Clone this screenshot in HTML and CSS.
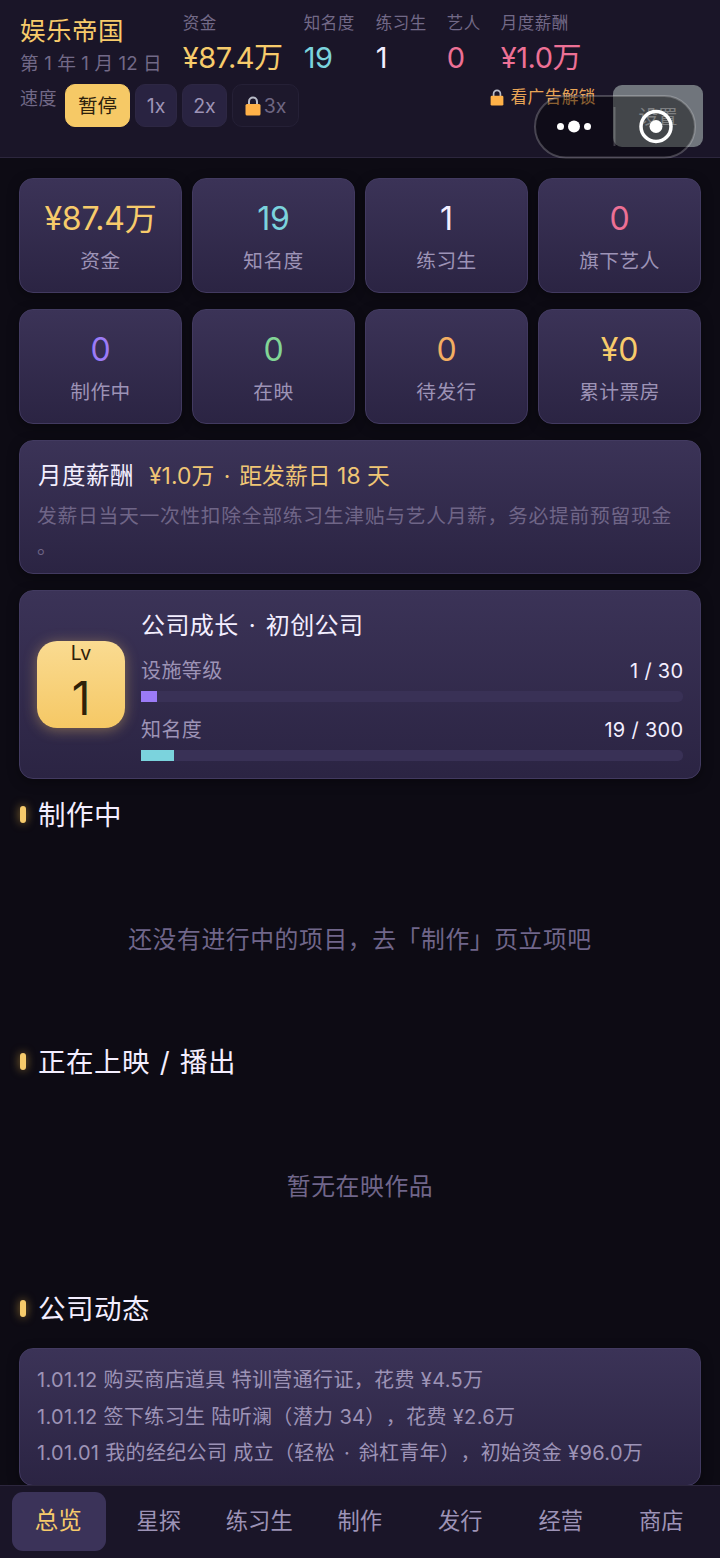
FILE: index.html
```html
<!DOCTYPE html>
<html lang="zh-CN">
<head>
<meta charset="utf-8">
<title>娱乐帝国</title>
<link rel="stylesheet" href="styles.css">
</head>
<body>
<header class="topbar">
  <div class="top-row">
    <div class="brand"><h1 class="brand-name gold">娱乐帝国</h1><div class="brand-date">第 1 年 1 月 12 日</div></div>
    <dl class="stat stat-money"><dt>资金</dt><dd class="gold">¥87.4万</dd></dl>
    <dl class="stat stat-fame"><dt>知名度</dt><dd class="cyan">19</dd></dl>
    <dl class="stat stat-trainee"><dt>练习生</dt><dd>1</dd></dl>
    <dl class="stat stat-artist"><dt>艺人</dt><dd class="pink">0</dd></dl>
    <dl class="stat stat-pay"><dt>月度薪酬</dt><dd class="pink">¥1.0万</dd></dl>
  </div>
  <div class="speed-row">
    <span class="speed-label">速度</span>
    <button class="speed speed-pause">暂停</button>
    <button class="speed speed-1">1x</button>
    <button class="speed speed-2">2x</button>
    <button class="speed speed-3"><svg class="lock" viewBox="0 0 16 20"><path d="M4 9V5.500a4 4 0 0 1 8 0V9" fill="none" stroke="#b9bcc8" stroke-width="2"/><rect x=".5" y="8" width="15" height="11.500" rx="1.500" fill="#ffb148"/></svg>3x</button>
    <span class="unlock"><svg class="lock-small" viewBox="0 0 16 20"><path d="M4 9V5.500a4 4 0 0 1 8 0V9" fill="none" stroke="#b9bcc8" stroke-width="2"/><rect x=".5" y="8" width="15" height="11.500" rx="1.500" fill="#ffb148"/></svg>看广告解锁</span>
    <button class="settings">设置</button>
  </div>
  <div class="capsule">
    <svg viewBox="0 0 162 64"><rect x="1" y="1" width="160" height="61.500" rx="30.750" fill="#000" fill-opacity=".4" stroke="#fff" stroke-opacity=".22" stroke-width="2"/><path d="M80.500 12v39" stroke="#fff" stroke-opacity=".2" stroke-width="2"/><g fill="#fff"><circle cx="26.500" cy="31.500" r="3.500"/><circle cx="40" cy="31.500" r="6"/><circle cx="53.500" cy="31.500" r="3.500"/><circle cx="122" cy="31.500" r="6.500"/></g><circle cx="122" cy="31.500" r="15" fill="none" stroke="#fff" stroke-width="3.500"/></svg>
  </div>
</header>
<main class="content">
  <section class="grid">
    <div class="card tile"><b class="gold">¥87.4万</b><span>资金</span></div>
    <div class="card tile"><b class="cyan">19</b><span>知名度</span></div>
    <div class="card tile"><b>1</b><span>练习生</span></div>
    <div class="card tile"><b class="pink">0</b><span>旗下艺人</span></div>
    <div class="card tile"><b class="purple">0</b><span>制作中</span></div>
    <div class="card tile"><b class="green">0</b><span>在映</span></div>
    <div class="card tile"><b class="orange">0</b><span>待发行</span></div>
    <div class="card tile"><b class="gold">¥0</b><span>累计票房</span></div>
  </section>
  <section class="card payroll">
    <div class="payroll-head"><span class="payroll-title">月度薪酬</span><span class="payroll-sum">¥1.0万 <i class="dot">·</i> 距发薪日 18 天</span></div>
    <p class="payroll-note">发薪日当天一次性扣除全部练习生津贴与艺人月薪，务必提前预留现金。</p>
  </section>
  <section class="card growth">
    <div class="level"><span class="level-label">Lv</span><span class="level-number">1</span></div>
    <div class="growth-body">
      <h2 class="growth-title">公司成长 <i class="dot">·</i> 初创公司</h2>
      <div class="meter-row"><span>设施等级</span><span class="meter-value">1 / 30</span></div>
      <div class="meter"><div class="fill fill-purple" style="width:3%"></div></div>
      <div class="meter-row meter-row-second"><span>知名度</span><span class="meter-value">19 / 300</span></div>
      <div class="meter"><div class="fill fill-cyan" style="width:6%"></div></div>
    </div>
  </section>
  <h2 class="section-title">制作中</h2>
  <p class="empty">还没有进行中的项目，去「制作」页立项吧</p>
  <h2 class="section-title">正在上映 / 播出</h2>
  <p class="empty">暂无在映作品</p>
  <h2 class="section-title">公司动态</h2>
  <ul class="card log">
    <li><span class="log-date">1.01.12</span> 购买商店道具 特训营通行证，花费 ¥4.5万</li>
    <li><span class="log-date">1.01.12</span> 签下练习生 陆听澜（潜力 34），花费 ¥2.6万</li>
    <li><span class="log-date">1.01.01</span> 我的经纪公司 成立（轻松 <i class="dot">·</i> 斜杠青年），初始资金 ¥96.0万</li>
  </ul>
</main>
<nav class="tabs">
  <a class="tab tab-active">总览</a><a class="tab">星探</a><a class="tab">练习生</a><a class="tab">制作</a><a class="tab">发行</a><a class="tab">经营</a><a class="tab">商店</a>
</nav>
</body>
</html>
```
FILE: styles.css
```css
* { box-sizing: border-box; margin: 0; padding: 0; }
body {
  width: 720px; height: 1558px; overflow: hidden;
  display: flex; flex-direction: column;
  background: #0d0b14; color: #f3eeff;
  font-family: Inter, "Noto Sans CJK SC", sans-serif;
  font-weight: 399; text-spacing-trim: space-all;
  white-space: nowrap;
}
h1, h2, b, button { font-family: inherit; font-weight: inherit; }
.gold { color: #f7cb6b; }
.cyan { color: #7bd3dd; }
.pink { color: #ed7095; }
.purple { color: #9b7bf7; }
.green { color: #82d596; }
.orange { color: #f3ae62; }
.dot { font-style: normal; padding: 0 2.500px 0 3px; }

.topbar { position: relative; flex: none; height: 158px; background: #1a1528; border-bottom: 1px solid #2c263d; padding: 12px 17px 0 20px; }
.top-row { display: flex; height: 72px; }
.brand { width: 162.800px; padding-top: 1px; }
.brand-name { font-size: 25.500px; letter-spacing: .5px; line-height: 36px; }
.brand-date { font-size: 18.700px; letter-spacing: .1px; line-height: 29px; color: #726987; }
.stat dt { font-size: 16.500px; letter-spacing: .5px; line-height: 23px; color: #726987; }
.stat dd { font-size: 29px; line-height: 45px; letter-spacing: -.5px; }
.stat-money { width: 121px; }
.stat-fame { width: 72px; }
.stat-trainee { width: 71px; }
.stat-artist { width: 54px; }
.speed-row { display: flex; align-items: flex-start; }
.speed-label { width: 45px; font-size: 18px; letter-spacing: .5px; line-height: 29px; color: #726987; }
.speed { height: 43px; margin-right: 5px; border: 1px solid #2d2743; border-radius: 10px; background: #292341; color: #9d93b6; font-size: 19.500px; }
.speed-pause { width: 65px; padding-bottom: 2px; background: #f6c966; border-color: #f6c966; color: #2c200c; }
.speed-1 { width: 42px; }
.speed-2 { width: 45px; }
.speed-3 { width: 67px; display: flex; align-items: center; justify-content: center; background: #1d182c; border-color: #252036; color: #6e6682; }
.lock { width: 16px; height: 20px; margin-right: 3px; }
.unlock { display: flex; align-items: center; width: 126.500px; height: 26px; margin-left: 185.500px; color: #e8a456; font-size: 16.700px; letter-spacing: .4px; line-height: 23px; }
.lock-small { width: 14px; height: 17px; margin-right: 7px; }
.settings { flex: none; width: 90px; height: 62px; margin: 1px 0 0 -3px; padding-bottom: 2px; border: 0; border-radius: 9px; background: #70757c; color: #d3d6d9; font-size: 19.500px; }
.capsule { position: absolute; left: 534px; top: 95px; width: 162px; height: 64px; }
.capsule svg { display: block; width: 162px; height: 64px; }

.content { flex: none; height: 1327px; padding: 20px 19px 0; overflow: hidden; }
.card { border: 1px solid #423a60; border-radius: 14px; background: linear-gradient(#3b3357, #2b2443); box-shadow: 0 3px 12px rgba(0, 0, 0, .35); }
.grid { display: grid; grid-template-columns: repeat(4, 1fr); gap: 16px 10px; }
.tile { height: 115px; padding-top: 17px; display: flex; flex-direction: column; align-items: center; }
.tile b { font-size: 32px; line-height: 46px; letter-spacing: -.2px; }
.tile span { font-size: 19.700px; letter-spacing: .5px; line-height: 38px; color: #9d93b6; }
.payroll { height: 134px; margin-top: 16px; padding: 16px 17px 0 18px; }
.payroll-head { display: flex; gap: 15px; line-height: 37px; height: 36px; }
.payroll-title { font-size: 23.500px; letter-spacing: .5px; }
.payroll-sum { font-size: 22.800px; letter-spacing: .05px; color: #f0c675; }
.payroll-note { font-size: 19.800px; letter-spacing: .7px; line-height: 31px; margin: 8px 0 0 -1px; color: #6f6587; white-space: normal; line-break: anywhere; }
.growth { height: 189px; margin-top: 16px; padding: 16px 17px 0 17px; display: flex; gap: 16px; }
.level { width: 88px; height: 87px; margin-top: 34px; border-radius: 20px; display: flex; flex-direction: column; align-items: center; color: #2f2109; background: linear-gradient(#fadb91, #f5c865); box-shadow: 0 2px 14px rgba(247, 201, 102, .4); }
.level-label { font-size: 19.500px; line-height: 24px; }
.level-number { font-size: 46px; line-height: 66px; }
.growth-body { flex: 1; }
.growth-title { font-size: 24px; letter-spacing: .4px; line-height: 37px; height: 36px; }
.meter-row { display: flex; justify-content: space-between; margin-top: 13px; font-size: 20px; letter-spacing: .4px; line-height: 30px; height: 30px; color: #9d93b6; }
.meter-value { color: #f3eeff; margin-right: -.4px; letter-spacing: .3px; }
.meter { height: 11px; margin-top: 5px; border-radius: 5px; background: #393156; }
.fill { height: 11px; }
.fill-purple { background: #9b7bf7; }
.fill-cyan { background: #7bd3dd; }
.section-title { display: flex; align-items: center; gap: 12px; height: 36px; padding: 0 0 3px 1px; font-size: 27.500px; letter-spacing: .5px; word-spacing: 1.500px; }
.section-title::before { content: ""; width: 6px; height: 17px; margin-top: 3px; border-radius: 3px; background: #f7cb6b; box-shadow: 0 0 10px rgba(247, 190, 70, .6); }
.growth + .section-title { margin-top: 17px; }
.empty { height: 211px; display: flex; align-items: center; justify-content: center; font-size: 23.800px; letter-spacing: .6px; color: #70668a; }
.log { height: 138px; margin-top: 22px; padding: 13px 17px 0; list-style: none; font-size: 20px; letter-spacing: .35px; line-height: 36.700px; color: #9d93b6; }
.log-date { letter-spacing: .3px; }

.tabs { flex: none; height: 73px; padding: 6px 11px 0 11.500px; display: flex; gap: 6px; background: #1a1528; border-top: 1px solid #2c263d; }
.tab { flex: 1; height: 59px; padding: 0 1px 5px 0; display: flex; align-items: center; justify-content: center; border-radius: 11px; font-size: 22.300px; color: #9d93b6; }
.tab-active { background: #3b3359; color: #f7cb6b; font-size: 23.500px; }
```
